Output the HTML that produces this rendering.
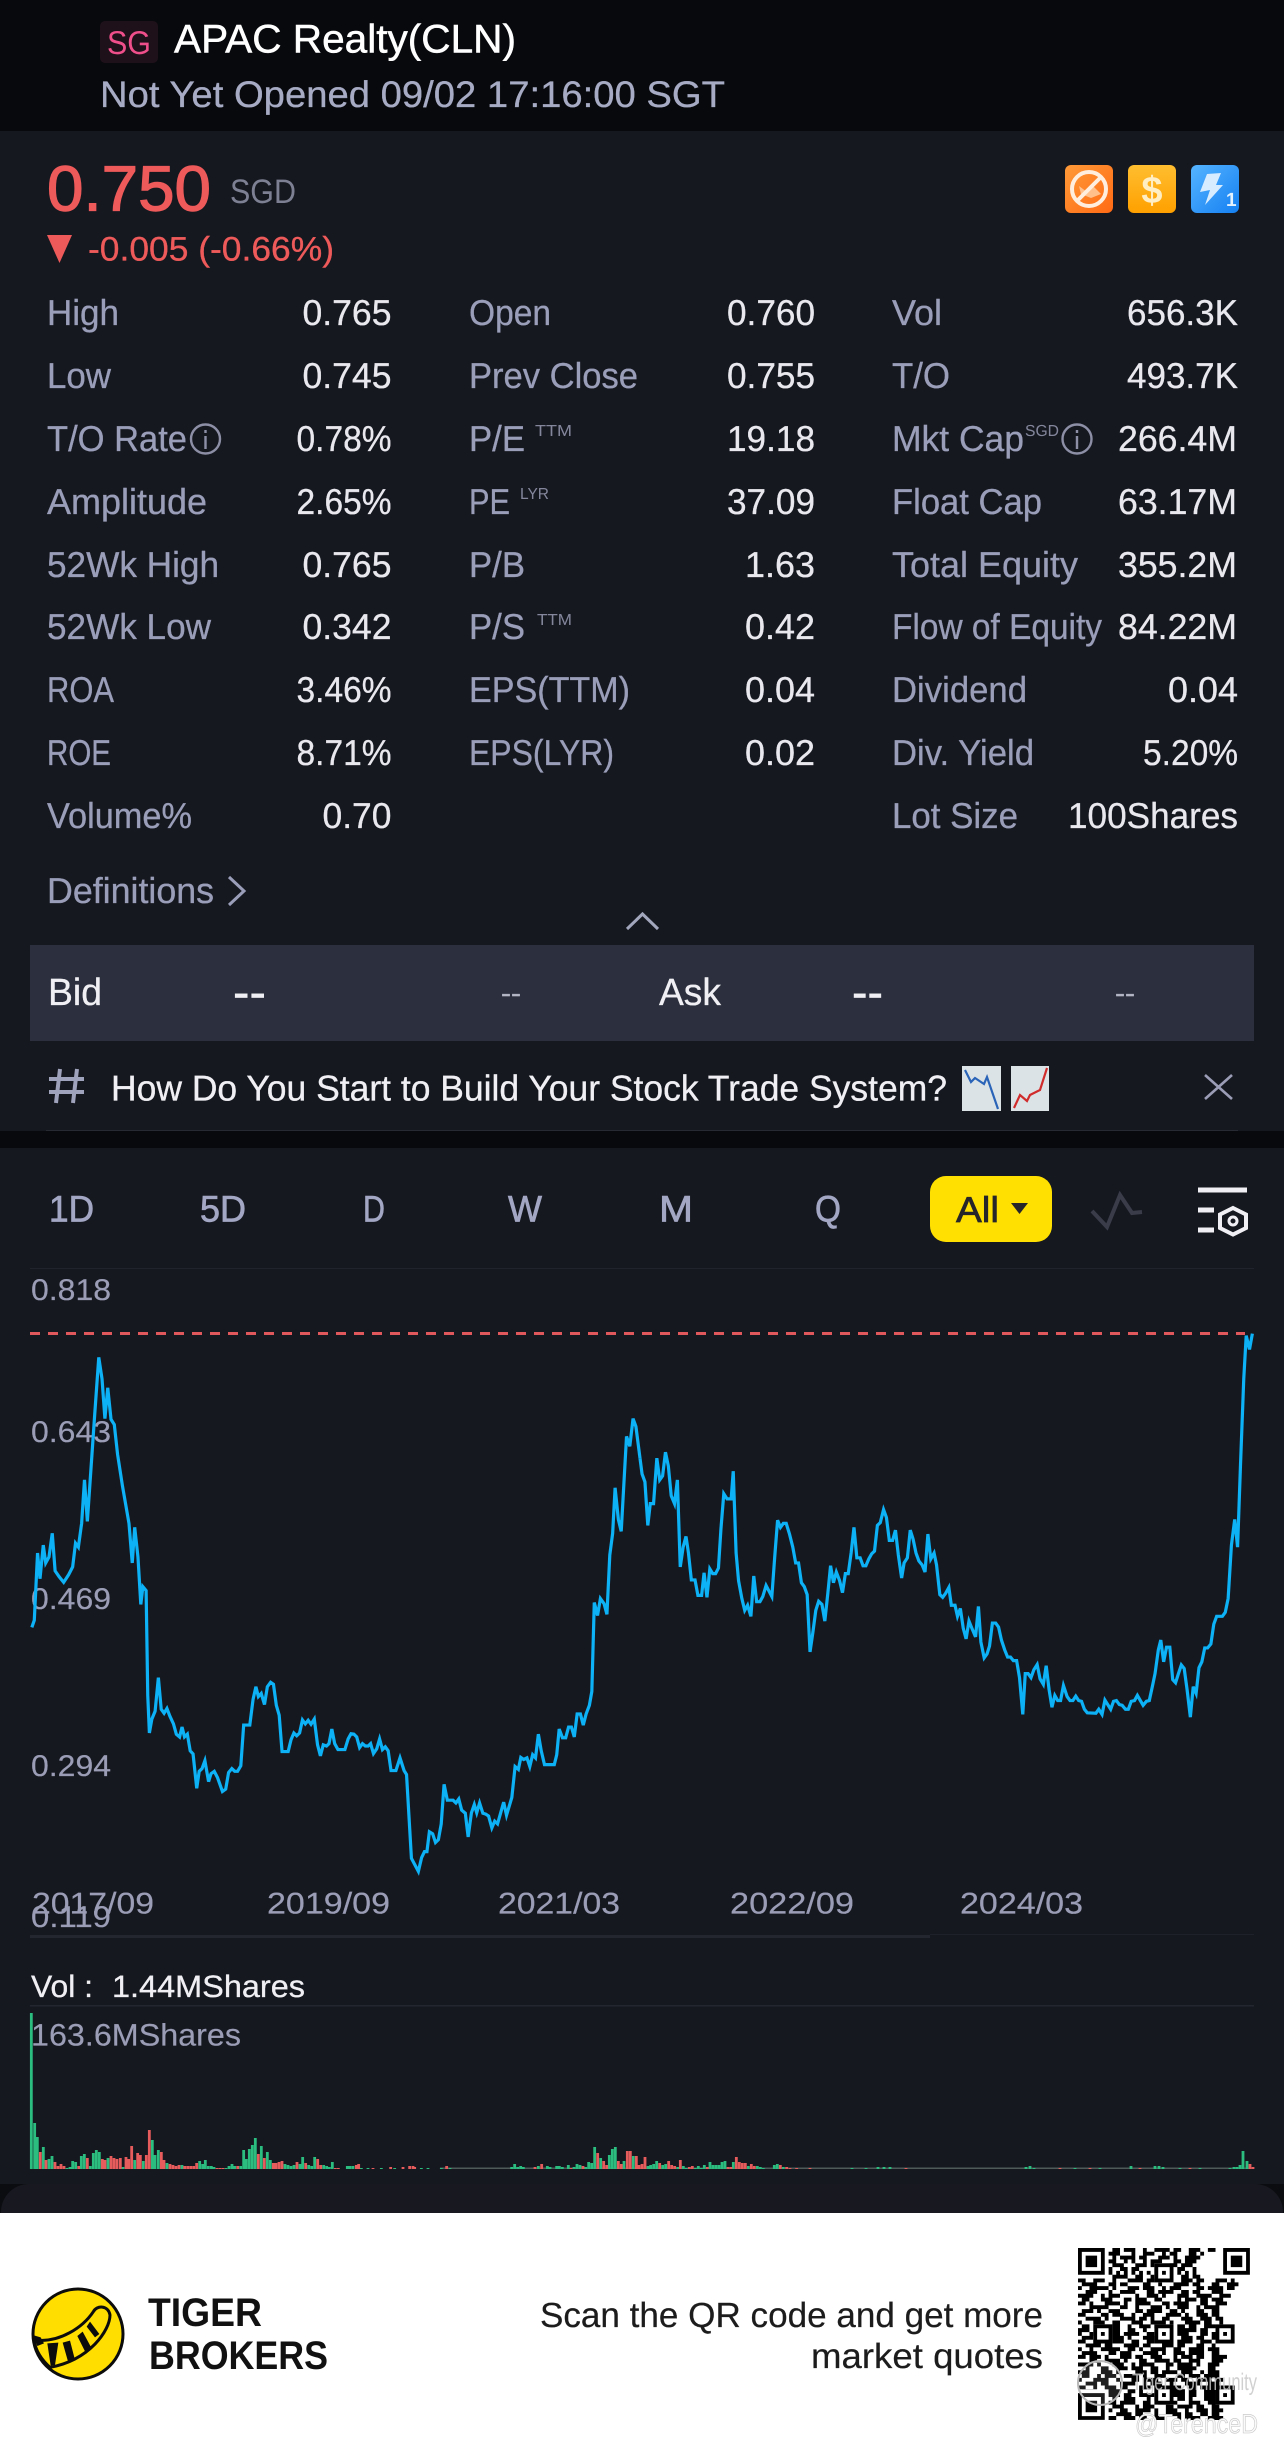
<!DOCTYPE html>
<html><head><meta charset="utf-8"><title>APAC Realty(CLN)</title>
<style>
html,body{margin:0;padding:0;background:#161820}
svg{display:block}
text{font-family:"Liberation Sans",sans-serif;text-rendering:geometricPrecision}
.l{fill:#9a9eb8;stroke:#9a9eb8;stroke-width:.3px;font-size:36px}
.v{fill:#e8e8ee;stroke:#e8e8ee;stroke-width:.3px;font-size:36px}
.s{fill:#84879c;font-size:16px}
.t{fill:#a3a7c3;stroke:#a3a7c3;stroke-width:.7px;font-size:37px}
.a{fill:#9a9db5;stroke:#9a9db5;stroke-width:.2px;font-size:30px}
</style></head><body>
<svg xmlns="http://www.w3.org/2000/svg" width="1284" height="2454" viewBox="0 0 1284 2454">
<defs>
<linearGradient id="go" x1="0" y1="0" x2="1" y2="1"><stop offset="0" stop-color="#ff9a38"/><stop offset="1" stop-color="#ff6a14"/></linearGradient>
<linearGradient id="gy" x1="0" y1="0" x2="0" y2="1"><stop offset="0" stop-color="#ffbe30"/><stop offset="1" stop-color="#ffa000"/></linearGradient>
<linearGradient id="gb" x1="0" y1="0" x2="1" y2="1"><stop offset="0" stop-color="#55b4ff"/><stop offset="1" stop-color="#1580f2"/></linearGradient>
</defs>
<rect width="1284" height="2454" fill="#161820"/>
<!-- header -->
<rect width="1284" height="131" fill="#07090c"/>
<rect x="100" y="21" width="58" height="42" rx="5" fill="#1f1119"/>
<text x="107" y="54" font-size="33" fill="#ef4f8b" textLength="44" lengthAdjust="spacingAndGlyphs">SG</text>
<text x="174" y="52.5" font-size="40" fill="#fff" stroke="#fff" stroke-width=".5" textLength="342" lengthAdjust="spacingAndGlyphs">APAC Realty(CLN)</text>
<text x="100" y="107" font-size="37" fill="#a7abc4" stroke="#a7abc4" stroke-width=".3" textLength="625" lengthAdjust="spacingAndGlyphs">Not Yet Opened 09/02 17:16:00 SGT</text>
<!-- price -->
<text x="47" y="210.5" font-size="64" fill="#ee5a5a" stroke="#ee5a5a" stroke-width="1.200" textLength="164" lengthAdjust="spacingAndGlyphs">0.750</text>
<text x="230" y="203" font-size="34" fill="#7d8092" textLength="66" lengthAdjust="spacingAndGlyphs">SGD</text>
<path d="M47 235H72L59.500 263Z" fill="#ee5a5a"/>
<text x="88" y="260.500" font-size="34" fill="#ee5a5a" stroke="#ee5a5a" stroke-width=".3" textLength="246" lengthAdjust="spacingAndGlyphs">-0.005 (-0.66%)</text>
<!-- badges -->
<rect x="1065" y="165" width="48" height="48" rx="6" fill="url(#go)"/>
<path d="M1079 186l8 6 6-6 8 8-10 4-10-4z" fill="#ffc08c"/>
<circle cx="1089" cy="189" r="17" fill="none" stroke="#ffeede" stroke-width="4"/>
<path d="M1101 177L1077 201" stroke="#ffeede" stroke-width="4"/>
<rect x="1128" y="165" width="48" height="48" rx="6" fill="url(#gy)"/>
<text x="1152" y="203" font-size="38" font-weight="bold" fill="#ffedc4" text-anchor="middle">$</text>
<rect x="1191" y="165" width="48" height="48" rx="6" fill="url(#gb)"/>
<path d="M1207 174L1221 173L1216 185L1223 185L1205 205L1210 190L1200 192Z" fill="#d8ecff"/>
<text x="1226" y="206" font-size="19" font-weight="bold" fill="#e4f2ff">1</text>
<!-- table col 1 -->
<text class="l" x="47" y="325" textLength="72" lengthAdjust="spacingAndGlyphs">High</text>
<text class="v" x="302.500" y="325" textLength="89" lengthAdjust="spacingAndGlyphs">0.765</text>
<text class="l" x="47" y="388" textLength="64" lengthAdjust="spacingAndGlyphs">Low</text>
<text class="v" x="302.500" y="388" textLength="89" lengthAdjust="spacingAndGlyphs">0.745</text>
<text class="l" x="47" y="451" textLength="140" lengthAdjust="spacingAndGlyphs">T/O Rate</text>
<text class="v" x="296.500" y="451" textLength="95" lengthAdjust="spacingAndGlyphs">0.78%</text>
<text class="l" x="47" y="514" textLength="160" lengthAdjust="spacingAndGlyphs">Amplitude</text>
<text class="v" x="296.500" y="514" textLength="95" lengthAdjust="spacingAndGlyphs">2.65%</text>
<text class="l" x="47" y="577" textLength="172" lengthAdjust="spacingAndGlyphs">52Wk High</text>
<text class="v" x="302.500" y="577" textLength="89" lengthAdjust="spacingAndGlyphs">0.765</text>
<text class="l" x="47" y="639" textLength="164" lengthAdjust="spacingAndGlyphs">52Wk Low</text>
<text class="v" x="302.500" y="639" textLength="89" lengthAdjust="spacingAndGlyphs">0.342</text>
<text class="l" transform="translate(47,702) scale(.859,1)" font-size="36">ROA</text>
<text class="v" x="296.500" y="702" textLength="95" lengthAdjust="spacingAndGlyphs">3.46%</text>
<text class="l" transform="translate(47,765) scale(.82,1)">ROE</text>
<text class="v" x="296.500" y="765" textLength="95" lengthAdjust="spacingAndGlyphs">8.71%</text>
<text class="l" x="47" y="828" textLength="145" lengthAdjust="spacingAndGlyphs">Volume%</text>
<text class="v" x="322.500" y="828" textLength="69" lengthAdjust="spacingAndGlyphs">0.70</text>
<!-- col 2 -->
<text class="l" x="469" y="325" textLength="82" lengthAdjust="spacingAndGlyphs">Open</text>
<text class="v" x="727" y="325" textLength="88" lengthAdjust="spacingAndGlyphs">0.760</text>
<text class="l" x="469" y="388" textLength="169" lengthAdjust="spacingAndGlyphs">Prev Close</text>
<text class="v" x="727" y="388" textLength="88" lengthAdjust="spacingAndGlyphs">0.755</text>
<text class="l" x="469" y="451" textLength="56" lengthAdjust="spacingAndGlyphs">P/E</text>
<text class="s" x="535" y="436" textLength="37" lengthAdjust="spacingAndGlyphs">TTM</text>
<text class="v" x="727" y="451" textLength="88" lengthAdjust="spacingAndGlyphs">19.18</text>
<text class="l" transform="translate(469,514) scale(.854,1)">PE</text>
<text class="s" x="520" y="499" textLength="29" lengthAdjust="spacingAndGlyphs">LYR</text>
<text class="v" x="727" y="514" textLength="88" lengthAdjust="spacingAndGlyphs">37.09</text>
<text class="l" x="469" y="577" textLength="56" lengthAdjust="spacingAndGlyphs">P/B</text>
<text class="v" x="745" y="577" textLength="70" lengthAdjust="spacingAndGlyphs">1.63</text>
<text class="l" x="469" y="639" textLength="56" lengthAdjust="spacingAndGlyphs">P/S</text>
<text class="s" x="537" y="625" textLength="35" lengthAdjust="spacingAndGlyphs">TTM</text>
<text class="v" x="745" y="639" textLength="70" lengthAdjust="spacingAndGlyphs">0.42</text>
<text class="l" x="469" y="702" textLength="161" lengthAdjust="spacingAndGlyphs">EPS(TTM)</text>
<text class="v" x="745" y="702" textLength="70" lengthAdjust="spacingAndGlyphs">0.04</text>
<text class="l" x="469" y="765" textLength="145" lengthAdjust="spacingAndGlyphs">EPS(LYR)</text>
<text class="v" x="745" y="765" textLength="70" lengthAdjust="spacingAndGlyphs">0.02</text>
<!-- col 3 -->
<text class="l" x="892" y="325" textLength="50" lengthAdjust="spacingAndGlyphs">Vol</text>
<text class="v" x="1127" y="325" textLength="111" lengthAdjust="spacingAndGlyphs">656.3K</text>
<text class="l" x="892" y="388" textLength="58" lengthAdjust="spacingAndGlyphs">T/O</text>
<text class="v" x="1127" y="388" textLength="111" lengthAdjust="spacingAndGlyphs">493.7K</text>
<text class="l" x="892" y="451" textLength="132" lengthAdjust="spacingAndGlyphs">Mkt Cap</text>
<text class="s" x="1025" y="436" textLength="34" lengthAdjust="spacingAndGlyphs">SGD</text>
<text class="v" x="1118" y="451" textLength="119" lengthAdjust="spacingAndGlyphs">266.4M</text>
<text class="l" x="892" y="514" textLength="150" lengthAdjust="spacingAndGlyphs">Float Cap</text>
<text class="v" x="1118" y="514" textLength="119" lengthAdjust="spacingAndGlyphs">63.17M</text>
<text class="l" x="892" y="577" textLength="186" lengthAdjust="spacingAndGlyphs">Total Equity</text>
<text class="v" x="1118" y="577" textLength="119" lengthAdjust="spacingAndGlyphs">355.2M</text>
<text class="l" x="892" y="639" textLength="210" lengthAdjust="spacingAndGlyphs">Flow of Equity</text>
<text class="v" x="1118" y="639" textLength="119" lengthAdjust="spacingAndGlyphs">84.22M</text>
<text class="l" x="892" y="702" textLength="135" lengthAdjust="spacingAndGlyphs">Dividend</text>
<text class="v" x="1168" y="702" textLength="70" lengthAdjust="spacingAndGlyphs">0.04</text>
<text class="l" x="892" y="765" textLength="142" lengthAdjust="spacingAndGlyphs">Div. Yield</text>
<text class="v" x="1143" y="765" textLength="95" lengthAdjust="spacingAndGlyphs">5.20%</text>
<text class="l" x="892" y="828" textLength="126" lengthAdjust="spacingAndGlyphs">Lot Size</text>
<text class="v" x="1068" y="828" textLength="170" lengthAdjust="spacingAndGlyphs">100Shares</text>
<!-- info icons -->
<g fill="none" stroke="#8c8fa5" stroke-width="2.400">
<circle cx="205.500" cy="439" r="14.500"/><path d="M205.500 436V449M205.500 430V433"/>
<circle cx="1077" cy="439" r="14.500"/><path d="M1077 436V449M1077 430V433"/>
</g>
<!-- definitions -->
<text class="l" x="47" y="903" textLength="167" lengthAdjust="spacingAndGlyphs">Definitions</text>
<path d="M229 877L244 891L229 905" fill="none" stroke="#9a9eb8" stroke-width="3"/>
<path d="M627 929L642.500 914L658 929" fill="none" stroke="#a3a7bd" stroke-width="3"/>
<!-- bid/ask -->
<rect x="30" y="945" width="1224" height="96" fill="#2c2f3d"/>
<text x="48" y="1005" font-size="38" fill="#f0f0f4" stroke="#f0f0f4" stroke-width=".3" textLength="54" lengthAdjust="spacingAndGlyphs">Bid</text>
<text x="659" y="1005" font-size="38" fill="#f0f0f4" stroke="#f0f0f4" stroke-width=".3" textLength="62" lengthAdjust="spacingAndGlyphs">Ask</text>
<text x="233" y="1005" font-size="36" font-weight="bold" fill="#f0f0f4" textLength="33" lengthAdjust="spacingAndGlyphs">--</text>
<text x="852" y="1005" font-size="36" font-weight="bold" fill="#f0f0f4" textLength="31" lengthAdjust="spacingAndGlyphs">--</text>
<text x="501" y="1002" font-size="26" fill="#b4b6c6" stroke="#b4b6c6" stroke-width=".4" textLength="20" lengthAdjust="spacingAndGlyphs">--</text>
<text x="1115" y="1002" font-size="26" fill="#b4b6c6" stroke="#b4b6c6" stroke-width=".4" textLength="20" lengthAdjust="spacingAndGlyphs">--</text>
<!-- topic row -->
<path d="M60 1069L56 1103M77 1069L73 1103M49 1079H84M49 1092H84" stroke="#a0a3bc" stroke-width="4" fill="none"/>
<text x="111" y="1100.500" font-size="36" fill="#f0f0f4" stroke="#f0f0f4" stroke-width=".3" textLength="836" lengthAdjust="spacingAndGlyphs">How Do You Start to Build Your Stock Trade System?</text>
<rect x="962" y="1066" width="39" height="45" fill="#dce3e6"/>
<path d="M965 1070L971 1082L975 1078L984 1084L987 1077L998 1109" fill="none" stroke="#2a64b8" stroke-width="2.200"/>
<rect x="1011" y="1066" width="38" height="45" fill="#dce3e6"/>
<path d="M1014 1108L1020 1095L1027 1101L1030 1095L1040 1090L1047 1068" fill="none" stroke="#d02c2c" stroke-width="2.200"/>
<path d="M1205 1075L1232 1099M1232 1075L1205 1099" stroke="#9a9db5" stroke-width="2.600" fill="none"/>
<rect x="46" y="1130" width="1192" height="1" fill="#272a33"/>
<rect y="1131" width="1284" height="17" fill="#08090c"/>
<!-- tabs -->
<text class="t" x="49" y="1221.500" textLength="45" lengthAdjust="spacingAndGlyphs">1D</text>
<text class="t" x="200" y="1221.500" textLength="46" lengthAdjust="spacingAndGlyphs">5D</text>
<text class="t" transform="translate(363,1221.500) scale(.82,1)">D</text>
<text class="t" x="508" y="1221.500" textLength="34" lengthAdjust="spacingAndGlyphs">W</text>
<text class="t" x="659" y="1221.500" textLength="34" lengthAdjust="spacingAndGlyphs">M</text>
<text class="t" transform="translate(815,1221.500) scale(.9,1)">Q</text>
<rect x="930" y="1176" width="122" height="66" rx="16" fill="#ffe000"/>
<text x="956" y="1222" font-size="36" fill="#26262a" stroke="#26262a" stroke-width=".7" textLength="43" lengthAdjust="spacingAndGlyphs">All</text>
<path d="M1011 1203H1028L1019.500 1214Z" fill="#26262a"/>
<path d="M1092 1211L1107 1227L1120 1195L1132 1213L1142 1212" fill="none" stroke="#3a3c4a" stroke-width="4"/>
<path d="M1198 1190H1247" stroke="#f0f0f4" stroke-width="5"/>
<path d="M1198 1210H1214M1198 1230H1214" stroke="#f0f0f4" stroke-width="5"/>
<path d="M1233 1208L1246 1214.500V1228L1233 1234.500L1220 1228V1214.500Z" fill="none" stroke="#f0f0f4" stroke-width="4"/>
<circle cx="1233" cy="1221" r="4" fill="none" stroke="#f0f0f4" stroke-width="3"/>
<rect x="30" y="1268" width="1224" height="1" fill="#20232c"/>
<!-- chart labels -->
<text class="a" x="31" y="1300" textLength="80" lengthAdjust="spacingAndGlyphs">0.818</text>
<text class="a" x="31" y="1442" textLength="80" lengthAdjust="spacingAndGlyphs">0.643</text>
<text class="a" x="31" y="1609" textLength="80" lengthAdjust="spacingAndGlyphs">0.469</text>
<text class="a" x="31" y="1776" textLength="80" lengthAdjust="spacingAndGlyphs">0.294</text>
<text class="a" x="31" y="1927" textLength="80" lengthAdjust="spacingAndGlyphs">0.119</text>
<text class="a" x="32" y="1913.500" textLength="122" lengthAdjust="spacingAndGlyphs">2017/09</text>
<text class="a" x="267" y="1913.500" textLength="123" lengthAdjust="spacingAndGlyphs">2019/09</text>
<text class="a" x="498" y="1913.500" textLength="122" lengthAdjust="spacingAndGlyphs">2021/03</text>
<text class="a" x="730" y="1913.500" textLength="124" lengthAdjust="spacingAndGlyphs">2022/09</text>
<text class="a" x="960" y="1913.500" textLength="123" lengthAdjust="spacingAndGlyphs">2024/03</text>
<path d="M30 1333.500H1245" stroke="#e0585c" stroke-width="3" stroke-dasharray="10 8" fill="none"/>
<!-- price line -->
<polyline transform="translate(0,1300) scale(.40816,.39541)" fill="none" stroke="#0db1f6" stroke-width="3.200" vector-effect="non-scaling-stroke" points="78,828 84,810 92,640 98,705 106,620 112,665 120,650 128,590 135,685 145,700 156,714 168,695 178,675 185,615 192,625 200,565 207,455 214,560 222,440 232,290 242,145 250,200 257,300 264,222 272,302 280,315 288,390 300,470 316,565 324,665 330,575 338,650 345,770 350,725 358,735 362,1000 366,1095 372,1060 380,1040 388,955 395,1035 402,1045 409,1033 416,1052 425,1072 432,1098 440,1105 446,1080 452,1105 459,1098 466,1140 473,1148 482,1235 488,1192 495,1185 502,1165 511,1218 517,1198 525,1192 533,1208 545,1243 553,1237 560,1195 568,1185 575,1192 582,1192 590,1178 597,1075 612,1075 620,1010 627,978 633,1003 640,995 648,1023 655,978 663,967 670,972 677,1025 684,1050 691,1142 706,1142 713,1112 720,1095 727,1102 734,1095 741,1062 748,1072 755,1063 762,1073 770,1060 778,1125 785,1153 792,1125 800,1128 806,1122 813,1085 820,1122 828,1137 845,1137 853,1110 860,1097 867,1098 874,1105 881,1132 888,1122 895,1128 902,1128 908,1122 915,1147 923,1135 930,1110 937,1137 944,1130 951,1140 958,1190 970,1190 980,1158 990,1190 996,1200 1008,1412 1025,1445 1033,1410 1040,1395 1046,1395 1052,1345 1060,1350 1067,1372 1074,1365 1081,1325 1088,1225 1096,1265 1110,1265 1117,1272 1124,1262 1131,1290 1140,1298 1147,1358 1155,1297 1162,1276 1168,1297 1175,1272 1183,1298 1190,1300 1197,1305 1205,1335 1212,1318 1219,1325 1234,1270 1241,1303 1254,1258 1262,1180 1270,1187 1276,1157 1283,1162 1291,1158 1298,1180 1305,1150 1312,1158 1319,1098 1326,1140 1334,1175 1358,1175 1364,1150 1370,1085 1378,1107 1386,1107 1393,1080 1400,1080 1407,1105 1414,1047 1422,1047 1429,1075 1436,1047 1444,1025 1450,990 1456,765 1464,798 1471,755 1480,768 1487,795 1494,645 1501,590 1507,475 1515,555 1522,585 1535,345 1543,370 1551,300 1558,320 1568,400"/>
<polyline transform="translate(640,1300) scale(.41071,.39541)" fill="none" stroke="#0db1f6" stroke-width="3.200" vector-effect="non-scaling-stroke" points="0,400 5,440 12,460 19,570 25,515 33,515 41,400 48,455 55,445 62,385 69,420 76,495 84,515 91,455 98,675 105,625 112,598 118,640 125,708 134,708 141,747 150,747 156,690 163,752 170,680 177,692 184,692 191,678 197,580 204,490 212,503 222,503 227,433 234,640 240,710 248,755 255,785 262,772 270,800 277,698 284,763 292,763 299,750 307,722 321,750 328,650 335,557 342,575 349,565 356,565 364,592 372,625 379,665 386,665 393,715 400,725 407,745 414,890 421,840 428,785 435,762 443,770 450,812 457,745 464,672 471,715 478,688 486,710 493,740 500,692 507,692 514,640 521,575 528,652 536,652 543,672 550,672 557,655 564,642 571,635 578,570 585,563 593,530 600,550 607,608 615,608 622,582 629,645 637,703 643,665 651,652 658,582 665,605 672,640 679,660 687,670 694,688 701,592 708,655 716,640 722,670 730,745 737,752 744,742 752,727 758,772 767,772 773,800 780,780 787,830 794,857 801,812 808,830 817,852 824,775 830,865 838,905 845,895 851,875 858,817 866,817 873,827 880,860 888,885 895,903 902,903 909,912 917,912 924,955 932,1048 938,945 945,945 952,955 959,935 967,922 974,958 982,972 989,925 996,985 1003,1030 1010,1000 1017,1013 1024,1013 1031,975 1040,1003 1047,1013 1054,1013 1061,1002 1068,1013 1075,1015 1082,1035 1089,1044 1110,1045 1117,1035 1125,1048 1132,1012 1146,1035 1153,1015 1160,1013 1167,1023 1174,1025 1182,1035 1189,1035 1196,1015 1204,1013 1211,1000 1225,1025 1233,1015 1240,1013 1248,975 1254,945 1262,885 1268,860 1275,915 1282,878 1290,878 1297,960 1304,968 1311,945 1318,923 1325,932 1332,985 1340,1055 1347,978 1354,995 1361,930 1368,915 1375,880 1382,880 1390,870 1397,820 1404,800 1418,800 1425,790 1432,755 1440,620 1448,555 1455,625 1462,420 1470,200 1476,90 1484,125 1491,85"/>
<!-- separators -->
<rect x="30" y="1935" width="900" height="3" fill="#23262f"/>
<rect x="930" y="1934" width="324" height="1" fill="#1e2129"/>
<text x="31" y="1997" font-size="31" fill="#f0f0f4" stroke="#f0f0f4" stroke-width=".3" textLength="62" lengthAdjust="spacingAndGlyphs">Vol :</text>
<text x="112" y="1997" font-size="31" fill="#f0f0f4" stroke="#f0f0f4" stroke-width=".3" textLength="193" lengthAdjust="spacingAndGlyphs">1.44MShares</text>
<rect x="30" y="2005" width="1224" height="1.500" fill="#23262f"/>
<!-- volume bars -->
<rect x="440" y="2167.500" width="814" height="1.500" fill="#4e5a58"/>
<g transform="translate(28,2169) scale(.33333,1)" fill="none">
<path vector-effect="non-scaling-stroke" stroke-width="2.800" stroke="#2bbd80" d="M10 0v-156M20 0v-46M28 0v-32M46 0v-22M63 0v-10M72 0v-13M117 0v-1M126 0v-2M134 0v-8M143 0v-7M160 0v-13M169 0v-15M187 0v-3M196 0v-16M205 0v-19M214 0v-17M240 0v-11M285 0v-2M320 0v-9M346 0v-8M373 0v-29M381 0v-14M391 0v-19M417 0v-6M462 0v-4M515 0v-8M524 0v-5M532 0v-9M541 0v-3M550 0v-3M558 0v-2M594 0v-1M603 0v-3M612 0v-5M620 0v-3M638 0v-3M647 0v-19M655 0v-10M664 0v-20M673 0v-24M682 0v-31M700 0v-23M718 0v-17M727 0v-9M771 0v-5M780 0v-4M789 0v-3M798 0v-4M816 0v-5M824 0v-12M842 0v-4M851 0v-3M860 0v-12M887 0v-4M896 0v-3M904 0v-2M913 0v-7M958 0v-3M966 0v-3M975 0v-3M1000 0v-1M1020 0v-1M1060 0v-1M1100 0v-1M1180 0v-1M1200 0v-1M1240 0v-1"/>
<path vector-effect="non-scaling-stroke" stroke-width="2.800" stroke="#e65b5b" d="M37 0v-17M54 0v-9M81 0v-7M90 0v-3M99 0v-5M108 0v-3M152 0v-3M178 0v-11M223 0v-10M231 0v-9M249 0v-13M258 0v-11M267 0v-10M277 0v-11M294 0v-12M302 0v-10M311 0v-23M329 0v-16M337 0v-14M355 0v-14M364 0v-39M400 0v-17M408 0v-9M426 0v-5M435 0v-4M444 0v-3M453 0v-4M470 0v-3M479 0v-3M488 0v-3M497 0v-3M506 0v-6M567 0v-1M576 0v-1M585 0v-1M629 0v-3M691 0v-15M709 0v-11M736 0v-6M744 0v-6M753 0v-7M762 0v-8M807 0v-7M833 0v-6M869 0v-10M878 0v-4M922 0v-1M931 0v-1M985 0v-4M992 0v-5M1035 0v-1M1088 0v-2M1125 0v-2M1145 0v-3M1155 0v-3M1160 0v-2"/>
</g>
<g transform="translate(440,2169) scale(.33333,1)" fill="none">
<path vector-effect="non-scaling-stroke" stroke-width="2.800" stroke="#2bbd80" d="M30 0v-1M215 0v-2M224 0v-5M233 0v-2M242 0v-3M250 0v-2M295 0v-3M322 0v-3M330 0v-2M350 0v-3M358 0v-3M367 0v-2M385 0v-4M402 0v-2M411 0v-5M420 0v-4M437 0v-2M446 0v-7M455 0v-6M464 0v-22M482 0v-11M508 0v-14M517 0v-20M526 0v-22M552 0v-8M580 0v-13M624 0v-3M632 0v-4M641 0v-5M650 0v-8M668 0v-4M677 0v-5M713 0v-2M730 0v-3M739 0v-1M766 0v-1M775 0v-3M784 0v-1M793 0v-4M810 0v-7M819 0v-4M828 0v-4M837 0v-4M846 0v-7M855 0v-8M880 0v-7M925 0v-3M952 0v-3M961 0v-2M970 0v-1M1003 0v-4M1012 0v-5M1030 0v-2"/>
<path vector-effect="non-scaling-stroke" stroke-width="2.800" stroke="#e65b5b" d="M20 0v-3M285 0v-2M305 0v-5M393 0v-1M429 0v-3M473 0v-16M491 0v-8M500 0v-4M535 0v-8M544 0v-5M562 0v-18M571 0v-18M589 0v-13M597 0v-4M606 0v-5M615 0v-12M659 0v-6M686 0v-8M695 0v-4M704 0v-3M721 0v-9M748 0v-2M757 0v-3M802 0v-2M864 0v-2M873 0v-2M889 0v-12M898 0v-7M907 0v-6M916 0v-6M934 0v-5M943 0v-3M1021 0v-4M1040 0v-2M1050 0v-1M1070 0v-1M1110 0v-1"/>
</g>
<path stroke-width="2.800" stroke="#2bbd80" fill="none" d="M852 2169v-1M866 2169v-1M878 2169v-2M884 2169v-2M890 2169v-2M1026 2169v-2M1030 2169v-3M1034 2169v-1M1131 2169v-3M1155 2169v-3M1159 2169v-3M1163 2169v-2M1230 2169v-1M1234 2169v-2M1237 2169v-2M1240 2169v-4M1243 2169v-18M1247 2169v-8M1075 2169v-1M1100 2169v-1M1180 2169v-1M1200 2169v-1"/>
<path stroke-width="2.800" stroke="#e65b5b" fill="none" d="M1250 2169v-5M1253 2169v-2M906 2169v-1M1060 2169v-1M1090 2169v-1M1140 2169v-1M1190 2169v-1"/>
<text x="31" y="2045.500" font-size="31" fill="#9a9db5" stroke="#9a9db5" stroke-width=".2" textLength="210" lengthAdjust="spacingAndGlyphs">163.6MShares</text>
<!-- bottom band -->
<rect y="2184" width="1284" height="30" fill="#0b0c10"/>
<rect x="1" y="2184" width="1282" height="60" rx="28" fill="#181920"/>
<!-- footer -->
<rect y="2213" width="1284" height="241" fill="#fff"/>
<circle cx="78" cy="2334" r="45" fill="#ffde00" stroke="#0c0c0c" stroke-width="3"/>
<g transform="translate(0,2180) scale(.33333)">
<path d="M103 480C180 490 250 440 280 395C290 375 325 375 330 405C330 450 270 540 150 562C125 540 105 510 103 480Z" fill="#ffde00" stroke="#0c0c0c" stroke-width="9"/>
<path d="M98 465L112 498L132 490L122 472Z" fill="#0c0c0c"/>
<path d="M142 490L175 488L165 555L152 557ZM188 488L210 482L225 540L205 548ZM232 468L248 455L275 505L258 520ZM260 440L270 425L298 462L285 472Z" fill="#0c0c0c"/>
</g>
<text x="148" y="2326" font-size="40" font-weight="bold" fill="#111" textLength="114" lengthAdjust="spacingAndGlyphs">TIGER</text>
<text x="149" y="2369" font-size="40" font-weight="bold" fill="#111" textLength="179" lengthAdjust="spacingAndGlyphs">BROKERS</text>
<text x="540" y="2327" font-size="35" fill="#1c1c1c" stroke="#1c1c1c" stroke-width=".2" textLength="503" lengthAdjust="spacingAndGlyphs">Scan the QR code and get more</text>
<text x="811" y="2368" font-size="35" fill="#1c1c1c" stroke="#1c1c1c" stroke-width=".2" textLength="232" lengthAdjust="spacingAndGlyphs">market quotes</text>
<!-- QR -->
<g transform="translate(1078,2248) scale(3.82)">
<path fill="none" stroke="#000" stroke-width="1.020" d="M9 .5h2m1 0h3m2 0h1m2 0h4m1 0h2m2 0h3m2 0h2M8 1.500h3m3 0h1m2 0h3m2 0h1m1 0h2m3 0h2m1 0h1M9 2.500h1m1 0h4m1 0h2m3 0h3m1 0h1m2 0h4M8 3.500h2m2 0h1m1 0h1m2 0h1m1 0h3m3 0h2m1 0h3M9 4.500h3m3 0h3m1 0h2m3 0h2m1 0h3M8 5.500h1m2 0h2m1 0h2m4 0h1m1 0h3m1 0h2m2 0h1M8 6.500h1m1 0h1m1 0h1m1 0h1m1 0h1m1 0h1m1 0h1m1 0h1m1 0h1m1 0h1m1 0h1m1 0h1M9 7.500h4m2 0h2m2 0h1m2 0h3m2 0h2m1 0h2M0 8.500h2m2 0h3m2 0h1m3 0h4m1 0h3m2 0h2m2 0h3m1 0h2m3 0h3m1 0h1M1 9.500h4m3 0h2m1 0h2m4 0h2m2 0h1m3 0h4m1 0h2m3 0h2m2 0h3M0 10.500h1m2 0h5m1 0h1m3 0h3m1 0h3m2 0h1m1 0h3m4 0h2m1 0h4m1 0h2M2 11.500h3m3 0h1m2 0h4m3 0h2m1 0h4m2 0h2m1 0h2m3 0h3M0 12.500h4m2 0h1m1 0h3m4 0h1m2 0h3m1 0h1m3 0h3m2 0h4m2 0h3M1 13.500h2m3 0h3m3 0h2m1 0h3m2 0h2m4 0h1m1 0h3m1 0h2m1 0h3M0 14.500h2m1 0h1m3 0h4m1 0h1m2 0h4m3 0h2m1 0h4m3 0h2m2 0h3M3 15.500h5m3 0h2m2 0h1m3 0h3m1 0h1m2 0h3m2 0h1m1 0h4M1 16.500h3m1 0h1m2 0h3m4 0h2m1 0h4m2 0h2m1 0h1m3 0h2m2 0h2M0 17.500h2m4 0h2m1 0h3m2 0h1m2 0h3m3 0h4m1 0h1m2 0h3m1 0h2M2 18.500h4m1 0h1m3 0h4m1 0h2m1 0h1m2 0h2m3 0h3m2 0h3m1 0h2M0 19.500h1m3 0h3m2 0h2m3 0h3m2 0h4m1 0h1m3 0h4m1 0h2m2 0h1M1 20.500h2m2 0h1m1 0h4m2 0h1m2 0h3m1 0h3m3 0h2m1 0h2m2 0h3M0 21.500h3m3 0h5m2 0h2m2 0h1m3 0h3m2 0h5m1 0h2m2 0h3M0 22.500h1m2 0h2m3 0h3m1 0h4m2 0h2m1 0h3m2 0h3m3 0h2m1 0h2M1 23.500h3m4 0h4m1 0h1m3 0h5m1 0h2m2 0h3m1 0h2m2 0h4M0 24.500h2m2 0h3m2 0h3m2 0h2m2 0h4m2 0h1m1 0h4m2 0h3m1 0h2M2 25.500h4m1 0h2m3 0h4m1 0h2m3 0h3m1 0h2m3 0h2m2 0h1M0 26.500h1m2 0h1m2 0h5m2 0h2m1 0h1m2 0h4m2 0h2m2 0h4m1 0h3M1 27.500h4m3 0h2m1 0h3m3 0h4m1 0h1m2 0h3m1 0h4m2 0h2M0 28.500h2m1 0h3m1 0h1m3 0h3m1 0h2m2 0h3m3 0h1m1 0h3m1 0h2m2 0h4M3 29.500h2m2 0h4m1 0h1m3 0h2m2 0h4m1 0h2m2 0h3m3 0h3M0 30.500h4m1 0h1m3 0h3m2 0h1m1 0h4m3 0h2m1 0h4m1 0h1m2 0h3M2 31.500h1m3 0h2m2 0h3m1 0h3m2 0h2m2 0h1m2 0h5m3 0h2M0 32.500h3m3 0h3m1 0h1m4 0h3m1 0h2m1 0h4m1 0h3m2 0h1m1 0h3M1 33.500h2m2 0h1m1 0h3m2 0h4m1 0h1m2 0h3m3 0h2m1 0h3m1 0h4M0 34.500h1m3 0h4m2 0h1m3 0h2m1 0h4m2 0h3m1 0h2m2 0h4m1 0h2M2 35.500h3m1 0h2m3 0h4m2 0h1m1 0h3m2 0h1m3 0h4m2 0h3M0 36.500h2m2 0h1m2 0h3m1 0h2m3 0h3m1 0h4m1 0h2m2 0h2m1 0h5M1 37.500h3m3 0h4m2 0h2m1 0h1m3 0h3m2 0h3m1 0h2m2 0h4M8 38.500h3m1 0h2m2 0h4m1 0h1m3 0h3m1 0h2m2 0h3m1 0h3M9 39.500h1m2 0h3m3 0h1m1 0h4m2 0h2m1 0h1m3 0h4m1 0h2M8 40.500h2m1 0h4m2 0h2m2 0h3m1 0h1m3 0h3m2 0h3M9 41.500h3m3 0h1m1 0h3m3 0h2m1 0h4m1 0h2m2 0h2M8 42.500h1m2 0h2m2 0h4m1 0h1m2 0h3m2 0h1m2 0h3m1 0h3M10 43.500h4m1 0h2m3 0h1m2 0h4m1 0h2m2 0h2m1 0h2M8 44.500h2m2 0h3m1 0h2m2 0h3m3 0h1m1 0h4m2 0h4"/>
<!-- finders -->
<path fill="#fff" d="M0 0h8v8H0zM37 0h8v8H37zM0 37h8v8H0z"/>
<path fill="#000" fill-rule="evenodd" d="M0 0h7v7H0zM1 1v5h5V1zM2 2h3v3H2zM38 0h7v7H38zM39 1v5h5V1zM40 2h3v3H40zM0 38h7v7H0zM1 39v5h5V39zM2 40h3v3H2z"/>
<!-- alignment -->
<path fill="#fff" d="M4 20h5v5H4zM20 4h5v5H20zM20 20h5v5H20zM20 36h5v5H20zM36 20h5v5H36zM36 36h5v5H36z"/>
<path fill="#000" fill-rule="evenodd" d="M4 20h5v5H4zM5 21v3h3V21zM6 22h1v1H6zM20 4h5v5H20zM21 5v3h3V5zM22 6h1v1H22zM20 20h5v5H20zM21 21v3h3V21zM22 22h1v1H22zM20 36h5v5H20zM21 37v3h3V37zM22 38h1v1H22zM36 20h5v5H36zM37 21v3h3V21zM38 22h1v1H38zM36 36h5v5H36zM37 37v3h3V37zM38 38h1v1H38z"/>
</g>
<!-- watermark -->
<circle cx="1100" cy="2383" r="22" fill="rgba(255,255,255,.12)" stroke="#b8b8b8" stroke-width="2"/>
<text x="1132" y="2390" font-size="24" fill="rgba(200,200,200,.85)" textLength="125" lengthAdjust="spacingAndGlyphs">Tiger Community</text>
<text x="1135" y="2433" font-size="27" fill="#fafafa" stroke="#c4c4c4" stroke-width=".6" textLength="123" lengthAdjust="spacingAndGlyphs">@TerenceD</text>
</svg>
</body></html>
